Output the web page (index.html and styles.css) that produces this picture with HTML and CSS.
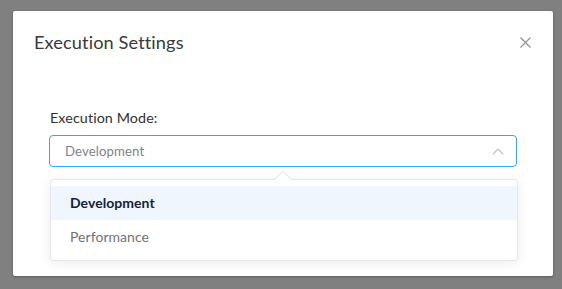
FILE: index.html
```html
<!DOCTYPE html>
<html>
<head>
<meta charset="utf-8">
<link rel="stylesheet" href="styles.css">
</head>
<body>
<div class="overlay">
  <div class="dialog">
    <div class="dialog-header">
      <span class="dialog-title">Execution Settings</span>
      <button class="close-btn" aria-label="Close">
        <svg width="11" height="11" viewBox="0 0 11 11"><path d="M0.5 0.5 L10.5 10.5 M10.5 0.5 L0.5 10.5" stroke="#909399" stroke-width="1.2" fill="none"/></svg>
      </button>
    </div>
    <div class="dialog-body">
      <label class="form-label">Execution Mode:</label>
      <div class="select">
        <div class="select-input">
          <span class="select-value">Development</span>
          <svg class="chevron" width="12" height="7" viewBox="0 0 12 7"><path d="M0.8 6.3 L6 1.2 L11.2 6.3" stroke="#c0c4cc" stroke-width="1.2" fill="none"/></svg>
        </div>
        <div class="dropdown">
          <div class="popper-arrow"></div>
          <ul class="dropdown-list">
            <li class="dropdown-item selected">Development</li>
            <li class="dropdown-item">Performance</li>
          </ul>
        </div>
      </div>
    </div>
  </div>
</div>
</body>
</html>
```
FILE: styles.css
```css
* { box-sizing: border-box; }
html, body { margin: 0; padding: 0; }
body {
  background: #808080;
  font-family: Lato, "Open Sans", sans-serif;
  width: 562px;
  height: 289px;
  overflow: hidden;
}
.overlay {
  padding: 11px 0 0 13px;
}
.dialog {
  width: 540px;
  height: 265px;
  background: #fff;
  border-radius: 2px;
  box-shadow: 0 1px 3px rgba(0,0,0,0.3);
}
.dialog-header {
  display: flex;
  align-items: center;
  justify-content: space-between;
  padding: 19px 22px 0 21px;
  height: 43px;
}
.dialog-title {
  font-size: 18.2px;
  line-height: 24px;
  color: #38393b;
  font-weight: 400;
  letter-spacing: 0.1px;
}
.close-btn {
  border: 0;
  background: none;
  padding: 0;
  width: 11px;
  height: 11px;
  display: flex;
}
.dialog-body {
  padding: 54px 36px 0 36px;
}
.form-label {
  display: block;
  font-size: 14.3px;
  line-height: 20px;
  color: #2f3134;
  padding-left: 1px;
  letter-spacing: 0.1px;
}
.select {
  position: relative;
  margin-top: 7px;
}
.select-input {
  height: 32px;
  border: 1px solid #409eff;
  border-radius: 4px;
  display: flex;
  align-items: center;
  justify-content: space-between;
  padding: 0 12px 0 15px;
}
.select-value {
  font-size: 13.2px;
  color: #808389;
  letter-spacing: 0.1px;
}
.chevron { display: block; }
.dropdown {
  position: absolute;
  left: 1px;
  right: -1px;
  top: 44px;
  background: #fff;
  border: 1px solid #e6e8ee;
  border-radius: 4px;
  box-shadow: 0 2px 12px rgba(0,0,0,0.08);
}
.popper-arrow {
  position: absolute;
  top: -7px;
  left: 226px;
  width: 12px;
  height: 12px;
  background: #fff;
  border-left: 1px solid #e6e8ee;
  border-top: 1px solid #e6e8ee;
  transform: rotate(45deg);
}
.dropdown-list {
  list-style: none;
  margin: 0;
  padding: 6px 0;
  position: relative;
}
.dropdown-item {
  height: 34px;
  line-height: 34px;
  padding: 0 19px;
  font-size: 14px;
  color: #707378;
  letter-spacing: 0.05px;
}
.dropdown-item.selected {
  background: #f0f6fe;
  color: #142235;
  font-weight: 700;
}
```
